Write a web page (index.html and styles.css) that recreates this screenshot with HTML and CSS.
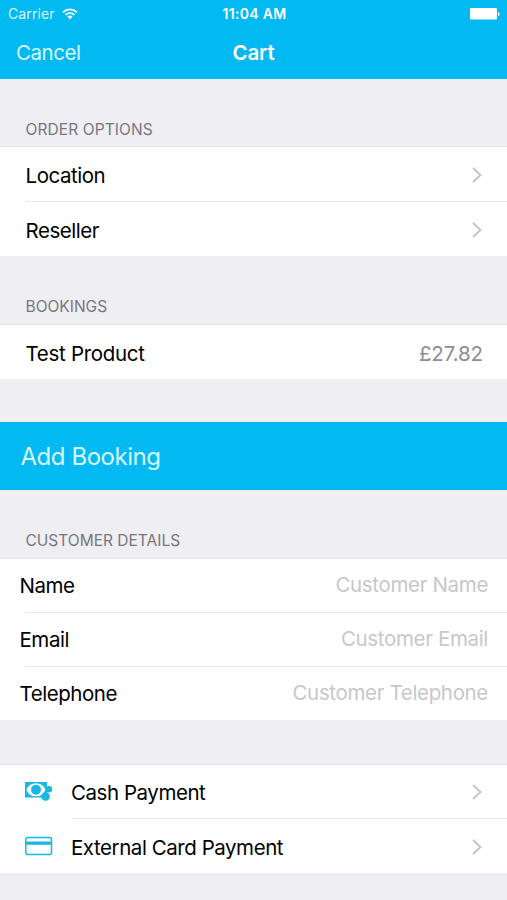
FILE: index.html
```html
<!DOCTYPE html>
<html lang="en">
<head>
<meta charset="utf-8">
<title>Cart</title>
<link rel="stylesheet" href="styles.css">
</head>
<body>
<header class="header">
  <div class="status">
    <div class="carrier"><span>Carrier</span>
      <svg class="wifi" width="16" height="12" viewBox="0 0 16 12" fill="none" stroke="currentColor" stroke-width="1.8"><path d="M1 4.3C5 .4 11 .4 15 4.3M3.5 6.9c2.6-2.5 6.4-2.5 9 0"/><path d="M5.4 8.6C7 7.2 9 7.2 10.6 8.6L8 11.4Z" fill="currentColor" stroke="none"/></svg>
    </div>
    <span class="time">11:04 AM</span>
    <svg class="battery" width="30" height="12" viewBox="0 0 30 12" fill="currentColor"><rect width="27" height="11.5" rx="1.3"/><path d="M28 4c2 .5 2 3.500 0 4z"/></svg>
  </div>
  <nav class="nav"><span class="cancel">Cancel</span><h1 class="title">Cart</h1><span></span></nav>
</header>
<main>
  <h2 class="section order">ORDER OPTIONS</h2>
  <div class="group">
    <div class="row"><span class="label">Location</span><svg class="chevron" width="12" height="18" viewBox="0 0 12 18"><path d="M2 2l7.500 7L2 16"/></svg></div>
    <div class="row tall"><span class="label">Reseller</span><svg class="chevron" width="12" height="18" viewBox="0 0 12 18"><path d="M2 2l7.500 7L2 16"/></svg></div>
  </div>
  <h2 class="section bookings">BOOKINGS</h2>
  <div class="group">
    <div class="row single"><span class="label product">Test Product</span><span class="price">£27.82</span></div>
  </div>
  <div class="add"><span>Add Booking</span></div>
  <h2 class="section customer">CUSTOMER DETAILS</h2>
  <div class="group fields">
    <div class="row"><span class="label">Name</span><span class="hint">Customer Name</span></div>
    <div class="row"><span class="label">Email</span><span class="hint">Customer Email</span></div>
    <div class="row"><span class="label">Telephone</span><span class="hint">Customer Telephone</span></div>
  </div>
  <div class="group payments">
    <div class="row">
      <svg class="icon" width="28" height="20" viewBox="0 0 28 20" fill="currentColor"><path d="M0 1h22v15.500H0z"/><path d="M1.500 8.700Q4 2.200 11 2.200T20.500 8.700Q18 15.300 11 15.300T1.500 8.700z" fill="#fff"/><circle cx="11" cy="8.700" r="5"/><circle cx="24" cy="8.200" r="3.200"/><circle cx="20.500" cy="15.500" r="4.300"/></svg>
      <span class="label">Cash Payment</span><svg class="chevron" width="12" height="18" viewBox="0 0 12 18"><path d="M2 2l7.500 7L2 16"/></svg></div>
    <div class="row tall">
      <svg class="icon" width="28" height="20" viewBox="0 0 28 20"><rect x=".8" y="1.500" width="25.700" height="17" rx="2" fill="none" stroke="currentColor" stroke-width="1.500"/><path d="M1 5.500h25.500v3.300H1z" fill="currentColor"/></svg>
      <span class="label">External Card Payment</span><svg class="chevron" width="12" height="18" viewBox="0 0 12 18"><path d="M2 2l7.500 7L2 16"/></svg></div>
  </div>
</main>
</body>
</html>
```
FILE: styles.css
```css
* { box-sizing: border-box; }
body {
  margin: 0;
  min-height: 900px;
  background: #efeef3;
  color: #000;
  font-family: Inter, "Liberation Sans", sans-serif;
  font-size: 20.500px;
  letter-spacing: -0.450px;
}
h1, h2 { margin: 0; }
.header { height: 79px; background: #02b9f2; color: #fff; }
.status, .nav {
  display: grid;
  grid-template-columns: 1fr auto 1fr;
  align-items: center;
}
.status { height: 27px; padding: 0 7px 0 8px; font-size: 14px; letter-spacing: 0.100px; }
.carrier { display: flex; align-items: center; gap: 7px; color: #d6f8ff; }
.wifi { color: #fff; }
.time { padding-left: 1px; font-weight: 600; letter-spacing: 0.300px; }
.battery { justify-self: end; }
.nav { height: 52px; padding: 0 16px 2px; }
.cancel { color: #d6f8ff; }
.title { font-size: 20.500px; font-weight: 600; letter-spacing: -0.100px; }
.section {
  display: flex;
  align-items: flex-end;
  height: 68px;
  padding: 0 25.500px 7px;
  color: #77777c;
  font-size: 15.500px;
  letter-spacing: 0;
  font-weight: 400;
  line-height: 20px;
}
.order { letter-spacing: 0.100px; }
.bookings { height: 69px; padding-bottom: 8px; }
.group { background: #fff; box-shadow: 0 -1px #e5e5e9; }
.row {
  display: flex;
  align-items: center;
  height: 54px;
  padding: 3px 24px 0 0;
  margin-left: 25px;
}
.row.tall { height: 55px; }
.row.single { height: 54px; padding-top: 2px; }
.row + .row { border-top: 1px solid #e7e7ea; }
.label { flex: 1; padding-left: 0.500px; }
.product { letter-spacing: -0.300px; }
.chevron { fill: none; stroke: #c3c3c8; stroke-width: 1.900; position: relative; top: -1px; }
.price { color: #8e8e93; letter-spacing: -0.100px; }
.add {
  display: flex;
  align-items: center;
  height: 68px;
  margin-top: 44px;
  padding-left: 20.500px;
  background: #02b9f2;
  color: #d6f8ff;
  font-size: 24px;
  letter-spacing: -0.450px;
}
.bookings + .group .row { height: 54px; margin-bottom: -1px; }
.customer { height: 69px; padding-bottom: 8px; }
.fields .row { padding: 0 19px 0 0; }
.fields .row:first-child { height: 53px; }
.fields .label { margin-left: -6px; }
.hint { color: #c7c7cc; letter-spacing: -0.340px; padding-bottom: 2px; }
.payments { margin-top: 45px; }
.payments .row { margin-left: 71px; }
.payments .row:first-child { height: 53px; padding-top: 2px; }
.payments .label { padding-left: 0; }
.icon { flex: none; margin-left: -46px; margin-right: 18px; margin-top: -4px; color: #1bb6e8; }
```
